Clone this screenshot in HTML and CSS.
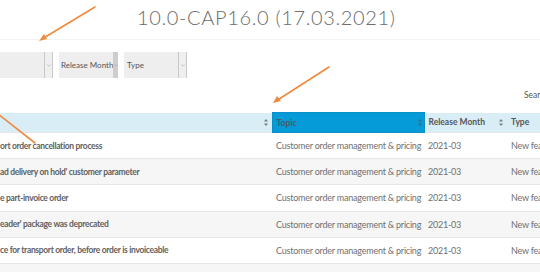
FILE: index.html
```html
<!DOCTYPE html>
<html lang="en">
<head>
<meta charset="utf-8">
<title>10.0-CAP16.0</title>
<link rel="stylesheet" href="styles.css">
</head>
<body>
<div class="page">
  <header class="title-bar">
    <h1 class="title">10.0-CAP16.0 (17.03.2021)</h1>
  </header>

  <div class="filters">
    <div class="select select-first">
      <span class="select-label"></span>
      <span class="select-btn bordered"><svg viewBox="0 0 6 4" class="chev"><polyline points="0.5,0.5 3,3 5.5,0.5"/></svg></span>
    </div>
    <div class="select select-month">
      <span class="select-label">Release Month</span>
      <span class="select-btn dark"><svg viewBox="0 0 6 4" class="chev"><polyline points="0.5,0.5 3,3 5.5,0.5"/></svg></span>
    </div>
    <div class="select select-type">
      <span class="select-label">Type</span>
      <span class="select-btn bordered"><svg viewBox="0 0 6 4" class="chev"><polyline points="0.5,0.5 3,3 5.5,0.5"/></svg></span>
    </div>
  </div>

  <div class="search-row">
    <label class="search-label">Search:</label>
  </div>

  <table class="grid">
    <thead>
      <tr>
        <th class="col-title"><span class="th-inner"><span></span><svg class="sort" viewBox="0 0 4 7"><polygon points="2,0 4,2.6 0,2.6"/><polygon points="0,4.4 4,4.4 2,7"/></svg></span></th>
        <th class="col-topic active"><span class="th-inner"><span>Topic</span><svg class="sort" viewBox="0 0 4 7"><polygon points="2,0 4,2.6 0,2.6"/><polygon points="0,4.4 4,4.4 2,7"/></svg></span></th>
        <th class="col-month"><span class="th-inner"><span>Release Month</span><svg class="sort" viewBox="0 0 4 7"><polygon points="2,0 4,2.6 0,2.6"/><polygon points="0,4.4 4,4.4 2,7"/></svg></span></th>
        <th class="col-type"><span class="th-inner"><span>Type</span></span></th>
      </tr>
    </thead>
    <tbody>
      <tr>
        <td class="c-title">ort order cancellation process</td>
        <td>Customer order management &amp; pricing</td>
        <td>2021-03</td>
        <td>New feature</td>
      </tr>
      <tr>
        <td class="c-title">ad delivery on hold' customer parameter</td>
        <td>Customer order management &amp; pricing</td>
        <td>2021-03</td>
        <td>New feature</td>
      </tr>
      <tr>
        <td class="c-title">e part-invoice order</td>
        <td>Customer order management &amp; pricing</td>
        <td>2021-03</td>
        <td>New feature</td>
      </tr>
      <tr>
        <td class="c-title">eader' package was deprecated</td>
        <td>Customer order management &amp; pricing</td>
        <td>2021-03</td>
        <td>New feature</td>
      </tr>
      <tr>
        <td class="c-title">ce for transport order, before order is invoiceable</td>
        <td>Customer order management &amp; pricing</td>
        <td>2021-03</td>
        <td>New feature</td>
      </tr>
      <tr>
        <td class="c-title">&nbsp;</td>
        <td>&nbsp;</td>
        <td>&nbsp;</td>
        <td>&nbsp;</td>
      </tr>
    </tbody>
  </table>

  <svg class="arrows" viewBox="0 0 540 272" width="540" height="272">
    <g class="arrow">
      <line x1="95" y1="7" x2="42" y2="39"/>
      <polygon points="39,41 44,34 47,39"/>
    </g>
    <g class="arrow">
      <line x1="329" y1="67" x2="276" y2="101"/>
      <polygon points="273,103 277,96 281,101"/>
    </g>
    <g class="arrow">
      <line x1="-2" y1="114" x2="35" y2="143"/>
    </g>
  </svg>
</div>
</body>
</html>
```
FILE: styles.css
```css
* { box-sizing: border-box; }
html, body { margin: 0; padding: 0; }
body {
  width: 540px;
  height: 272px;
  overflow: hidden;
  background: #fff;
  font-family: "Lato", "Open Sans", sans-serif;
  color: #666;
}
.page {
  position: relative;
  width: 540px;
  height: 272px;
  overflow: hidden;
}
.title-bar {
  height: 40px;
  border-bottom: 1px solid #f3f3f3;
  display: flex;
  align-items: center;
  padding-left: 137px;
}
.title {
  margin: 0;
  font-weight: 300;
  font-size: 20px;
  letter-spacing: 0.65px;
  color: #6c6c6c;
  line-height: 1;
  padding-bottom: 5px;
}
.filters {
  display: flex;
  gap: 6px;
  margin-top: 12px;
  height: 26px;
}
.select {
  display: flex;
  background: #eeeeee;
  height: 26px;
  font-size: 8px;
  color: #555;
  align-items: stretch;
}
.select-label {
  flex: 1;
  display: flex;
  align-items: center;
  padding-left: 2px;
  white-space: nowrap;
}
.select-first { width: 53px; }
.select-month { width: 59px; }
.select-type { width: 63px; }
.select-type .select-label { padding-left: 3px; }
.select-btn {
  width: 9px;
  display: flex;
  align-items: center;
  justify-content: center;
}
.select-btn.bordered {
  border-left: 1px solid #c8c8c8;
  border-right: 1px solid #c8c8c8;
  background: #efefef;
}
.select-btn.dark { background: #cdcdcd; }
.chev {
  width: 4px;
  height: 3px;
  fill: none;
  stroke: #999;
  stroke-width: 0.8;
}
.search-row {
  display: flex;
  height: 34px;
  align-items: center;
  padding-left: 524px;
  font-size: 8.5px;
  color: #555;
  white-space: nowrap;
}
.grid {
  border-collapse: collapse;
  table-layout: fixed;
  width: 600px;
  font-size: 9px;
}
.grid th, .grid td {
  padding: 0 4px 0 4px;
  text-align: left;
  white-space: nowrap;
  overflow: hidden;
}
.grid th {
  height: 20px;
  background: #d9edf7;
  color: #555;
  font-weight: 700;
  font-size: 8.5px;
}
.grid th.active {
  background: #059bd9;
  border: 1px solid #0a8fc8;
  color: #4a5a66;
  padding-right: 2px;
}
.th-inner {
  display: flex;
  justify-content: space-between;
  align-items: center;
}
.sort {
  width: 4px;
  height: 7px;
  fill: #7d7d7d;
  flex: none;
}
.active .sort { fill: #3c6a80; }
.col-title { width: 272px; }
.col-topic { width: 152px; }
.col-month { width: 83px; }
.col-type { width: 93px; }
.grid td {
  height: 26.2px;
  border-top: 1px solid #e7e7e7;
  color: #707070;
  letter-spacing: -0.22px;
}
.grid td.c-title {
  padding-left: 0;
  font-size: 8.5px;
  font-weight: 700;
  color: #5f5f5f;
  letter-spacing: -0.32px;
}
.grid tbody tr:nth-child(even) td { background: #f6f6f6; }
.arrows {
  position: absolute;
  left: 0;
  top: 0;
  overflow: visible;
  pointer-events: none;
}
.arrow line {
  stroke: #f08a3e;
  stroke-width: 1.6;
  stroke-linecap: round;
}
.arrow polygon { fill: #f08a3e; }
```
